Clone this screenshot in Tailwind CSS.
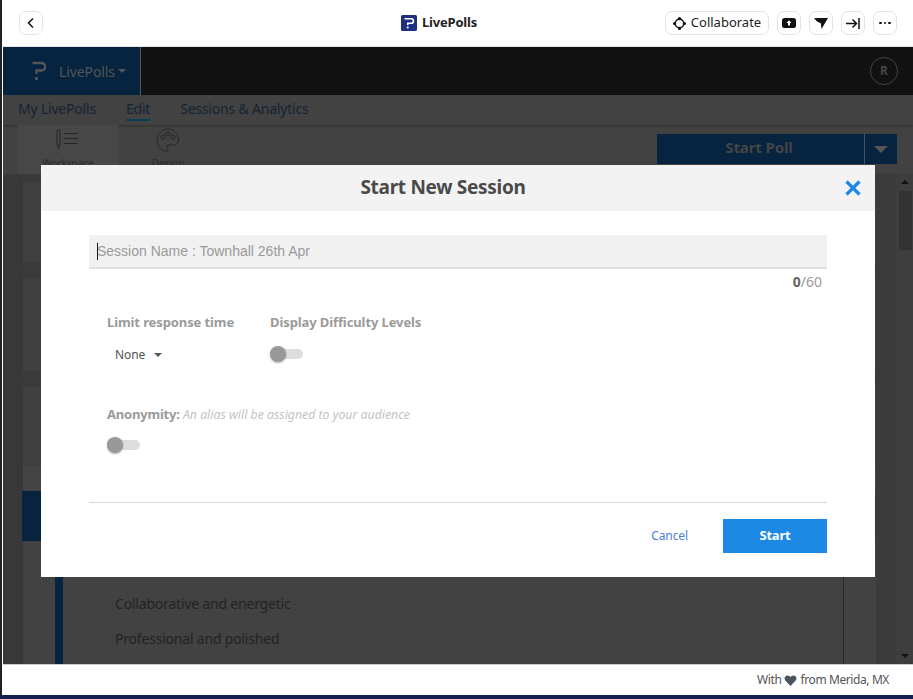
<!DOCTYPE html>
<html lang="en">
<head>
    <meta charset="UTF-8">
    <title>LivePolls</title>
    <script src="https://cdn.jsdelivr.net/npm/@tailwindcss/browser@4"></script>
</head>
<body class="h-[699px] w-[913px] overflow-hidden bg-white font-['Noto_Sans',sans-serif]">
    <div class="flex h-[695px]">
        <div class="w-[2px] bg-[#222]"></div>
        <div class="ml-px flex min-w-0 flex-1 flex-col">
            <!-- top bar -->
            <header class="relative flex h-[47px] shrink-0 items-center justify-between border-b border-[#e5e5e5] pl-[16px] pr-[16px]">
                <button class="flex h-6 w-6 items-center justify-center rounded-[7px] border border-[#e3e3e8]">
                    <svg width="10" height="12" viewBox="0 0 10 12" fill="none" stroke="#111" stroke-width="1.5"><path d="M7 1.5 2.5 6 7 10.5"/></svg>
                </button>
                <div class="absolute left-[398px] top-0 flex h-[46px] items-center gap-[5px]">
                    <svg width="16" height="16" viewBox="0 0 16 16"><rect width="16" height="16" rx="1.5" fill="#1f2f7f"/><path d="M3.500 3.700h6.700a2.300 2.300 0 0 1 0 4.600H6.800v2" fill="none" stroke="#fff" stroke-width="1.600"/><rect x="5.800" y="11.600" width="1.800" height="1.800" fill="#fff"/></svg>
                    <span class="text-[13px] font-bold tracking-[-0.2px] text-[#222]">LivePolls</span>
                </div>
                <div class="flex items-center gap-2">
                    <button class="flex h-6 w-[104px] items-center justify-center gap-[5px] rounded-[7px] border border-[#e3e3e8] text-[13px] text-[#222]">
                        <svg width="13" height="13" viewBox="0 0 13 13" fill="#111" stroke="none"><circle cx="6.500" cy="6.500" r="4.300" fill="none" stroke="#111" stroke-width="1.500"/><circle cx="6.500" cy="1.600" r="1.600"/><circle cx="6.500" cy="11.400" r="1.600"/><circle cx="1.600" cy="6.500" r="1.600"/><circle cx="11.400" cy="6.500" r="1.600"/></svg>
                        Collaborate
                    </button>
                    <button class="flex h-6 w-6 items-center justify-center rounded-[7px] border border-[#e3e3e8]">
                        <svg width="14" height="10" viewBox="0 0 14 10"><rect width="14" height="10" rx="2.500" fill="#111"/><path d="M7 2.200 9.500 5H8v2.400H6V5H4.500z" fill="#fff"/></svg>
                    </button>
                    <button class="flex h-6 w-6 items-center justify-center rounded-[7px] border border-[#e3e3e8]">
                        <svg width="14" height="11" viewBox="0 0 14 11"><path d="M0 0h14L7.500 11 6.800 5.200 3 3.400z" fill="#111"/></svg>
                    </button>
                    <button class="flex h-6 w-6 items-center justify-center rounded-[7px] border border-[#e3e3e8]">
                        <svg width="14" height="11" viewBox="0 0 14 11" fill="none" stroke="#111" stroke-width="1.500"><path d="M0 5.500h10M6.500 1.500l4 4-4 4M13 0v11"/></svg>
                    </button>
                    <button class="flex h-6 w-6 items-center justify-center gap-[2px] rounded-[7px] border border-[#e3e3e8]">
                        <span class="h-[2.500px] w-[2.500px] rounded-full bg-[#111]"></span>
                        <span class="h-[2.500px] w-[2.500px] rounded-full bg-[#111]"></span>
                        <span class="h-[2.500px] w-[2.500px] rounded-full bg-[#111]"></span>
                    </button>
                </div>
            </header>

            <!-- dimmed app -->
            <main class="relative flex min-h-0 flex-1 flex-col overflow-hidden bg-[#424242]">
                <div class="flex h-[48px] shrink-0 items-center justify-between bg-[#111] pr-[15px]">
                    <div class="flex h-full w-[138px] items-center border-r border-[#555] bg-[#06233f] pl-[29px]">
                        <svg width="14" height="20" viewBox="0 0 14 20" fill="none" stroke="#555"><path d="M.5 2h9a3 3 0 0 1 0 7.500H4.500V13" stroke-width="2.400"/><rect x="3" y="16" width="3" height="3" rx="1" fill="#555" stroke="none"/></svg>
                        <span class="ml-[13px] text-[14px] tracking-[-0.1px] text-[#555]">LivePolls</span>
                        <span class="ml-[3px] h-0 w-0 border-x-[4.500px] border-t-[4.500px] border-x-transparent border-t-[#555]"></span>
                    </div>
                    <div class="flex h-7 w-7 items-center justify-center rounded-full border border-[#444] text-[12px] font-bold text-[#444]">R</div>
                </div>
                <nav class="flex h-[30px] shrink-0 items-center gap-[30px] pb-[1px] pl-[15px] text-[14px] tracking-[-0.2px] text-[#142433] shadow-[0_1px_2px_rgba(0,0,0,0.3)]">
                    <span class="border-b-2 border-transparent leading-[20px]">My LivePolls</span>
                    <span class="border-b-2 border-[#0b3f55] leading-[20px]">Edit</span>
                    <span class="border-b-2 border-transparent leading-[20px]">Sessions &amp; Analytics</span>
                </nav>
                <div class="flex h-[49px] shrink-0 items-start justify-between pr-[16px]">
                    <div class="ml-[15px] flex h-full w-[100px] flex-col items-center bg-[#474747] pt-[4px]">
                        <svg width="24" height="21" viewBox="0 0 24 21" fill="none" stroke="#262626"><path d="M1 1h3v14l-1.500 5L1 15zM8 4.500h14M8 9.500h14M8 14.500h14"/></svg>
                        <span class="mt-[6px] text-[10px] leading-[15px] text-[#2a2a2a]">Workspace</span>
                    </div>
                    <div class="ml-[20px] flex w-[60px] flex-col items-center pt-[3px]">
                        <svg width="24" height="24" viewBox="0 0 24 24" fill="none" stroke="#262626"><path d="M12 1C5.500 1 1 6 1 12s4 11 10 11c1.500 0 1.500-2 .5-3-1-1.500 0-3 2-3h4c3 0 5-2 5-5 0-6-4.500-11-10.500-11z"/><circle cx="7" cy="9" r="2"/><circle cx="12" cy="6" r="2"/><circle cx="17" cy="9" r="2"/></svg>
                        <span class="mt-[4px] text-[10px] leading-[15px] text-[#2a2a2a]">Design</span>
                    </div>
                    <div class="ml-auto mt-[9px] flex h-[30px] w-[240px] bg-[#06233f]">
                        <span class="flex flex-1 items-center justify-center border-r border-[#3f5468] pb-[3px] pr-[3px] text-[15px] font-bold tracking-[-0.1px] text-[#444]">Start Poll</span>
                        <span class="flex w-[32px] items-center justify-center">
                            <span class="h-0 w-0 border-x-[7px] border-t-[7px] border-x-transparent border-t-[#555]"></span>
                        </span>
                    </div>
                </div>
                <div class="flex min-h-0 flex-1 border-t border-[#3a3a3a]">
                    <div class="w-[20px] bg-[#383838]"></div>
                    <div class="flex min-w-0 flex-1 flex-col bg-[#3a3a3a] pt-[7px]">
                        <div class="h-[80px] shrink-0 bg-[#404040]"></div>
                        <div class="mt-[16px] h-[93px] shrink-0 bg-[#404040]"></div>
                        <div class="mt-[16px] h-[79px] shrink-0 bg-[#404040]"></div>
                        <div class="h-[25px] shrink-0 bg-[#444]"></div>
                        <div class="-ml-px h-[50px] w-[60px] shrink-0 bg-[#06233f]"></div>
                        <div class="min-h-0 flex-1 bg-[#424242] pl-[32px] pr-[32px]">
                            <div class="h-full border-l-[8px] border-r border-l-[#06233f] border-r-[#1a2a38] pl-[52px] pt-[45px] text-[14px] tracking-[-0.2px] text-[#222]">
                                <p class="leading-[35px]">Collaborative and energetic</p>
                                <p class="leading-[35px]">Professional and polished</p>
                            </div>
                        </div>
                    </div>
                    <div class="w-[20px] bg-[#3b3b3b]"></div>
                    <div class="flex w-[17px] flex-col items-center justify-between bg-[#3e3e3e] pb-[6px] pt-[5px] pl-[1px]">
                        <div class="flex w-[13px] flex-col items-center">
                            <span class="h-0 w-0 border-x-[4px] border-b-[4px] border-x-transparent border-b-[#111]"></span>
                            <span class="mt-[7px] h-[59px] w-[13px] bg-[#333]"></span>
                        </div>
                        <span class="h-0 w-0 border-x-[4px] border-t-[4px] border-x-transparent border-t-[#111]"></span>
                    </div>
                </div>

                <!-- modal -->
                <div class="absolute left-[38px] top-[118px] h-[412px] w-[834px] bg-white">
                    <div class="relative flex h-[46px] items-center justify-center bg-[#f3f3f3] pb-[2px] pr-[30px] text-[19px] font-bold tracking-[-0.3px] text-[#4a4a4a]">
                        Start New Session
                        <svg class="absolute right-[14px] top-[15px]" width="16" height="16" viewBox="0 0 16 16" fill="none" stroke="#1e88e5" stroke-width="3.200"><path d="M1.500 1.500l13 13M14.500 1.500l-13 13"/></svg>
                    </div>
                    <div class="px-[48px] pt-[24px]">
                        <div class="flex h-[34px] items-center border-b-2 border-[#e0e0e0] bg-[#f1f1f1] pl-[8px] font-['Liberation_Sans',sans-serif] text-[14px] text-[#9a9a9a]">
                            <span class="mr-[-1px] h-[17px] w-px bg-[#111]"></span>Session Name : Townhall 26th Apr
                        </div>
                        <div class="mt-[3px] pr-[5px] text-right text-[14px] leading-[19px] text-[#999]"><b class="text-[#666]">0</b>/60</div>
                        <div class="mt-[22px] flex pl-[18px]">
                            <div class="w-[163px]">
                                <div class="text-[13px] font-bold tracking-[-0.1px] text-[#9a9a9a]">Limit response time</div>
                                <div class="mt-[13px] flex items-center pl-[8px] text-[12px] tracking-[-0.1px] text-[#555]">None<span class="ml-[9px] h-0 w-0 border-x-[4px] border-t-[4px] border-x-transparent border-t-[#555]"></span></div>
                            </div>
                            <div>
                                <div class="text-[13px] font-bold tracking-[-0.1px] text-[#9a9a9a]">Display Difficulty Levels</div>
                                <div class="relative mt-[16px] h-[10px] w-[33px] rounded-full bg-[#ddd]"><span class="absolute left-0 top-[-3px] h-4 w-4 rounded-full bg-[#999] shadow-[0_1px_2px_rgba(0,0,0,0.3)]"></span></div>
                            </div>
                        </div>
                        <div class="mt-[41px] pl-[18px]">
                            <div class="text-[13px] font-bold tracking-[-0.2px] text-[#9a9a9a]">Anonymity: <span class="text-[12.300px] font-normal italic tracking-normal text-[#c4c4c4]">An alias will be assigned to your audience</span></div>
                            <div class="relative mt-[16px] h-[10px] w-[33px] rounded-full bg-[#ddd]"><span class="absolute left-0 top-[-3px] h-4 w-4 rounded-full bg-[#999] shadow-[0_1px_2px_rgba(0,0,0,0.3)]"></span></div>
                        </div>
                        <div class="mt-[52px] border-t border-[#d8d8d8]"></div>
                        <div class="mt-[16px] flex items-center justify-end">
                            <span class="mr-[35px] text-[12px] tracking-[-0.1px] text-[#4a7fe0]">Cancel</span>
                            <button class="h-[34px] w-[104px] bg-[#1e88e5] text-[13px] font-bold tracking-[-0.2px] text-white">Start</button>
                        </div>
                    </div>
                </div>
            </main>

            <footer class="flex h-[31px] shrink-0 items-center justify-end gap-[3px] border-t border-[#ccc] pr-[24px] text-[12px] tracking-[-0.4px] text-[#555]">
                With
                <svg width="13" height="11" viewBox="0 0 12 11"><path d="M6 11 .8 5.500C-.8 3.500.3.500 3 .500c1.400 0 2.400.700 3 1.800C6.600 1.200 7.600.500 9 .500c2.700 0 3.800 3 2.200 5z" fill="#4a5560"/></svg>
                from Merida, MX
            </footer>
        </div>
    </div>
    <div class="h-[4px] bg-[#14214f]"></div>
</body>
</html>
